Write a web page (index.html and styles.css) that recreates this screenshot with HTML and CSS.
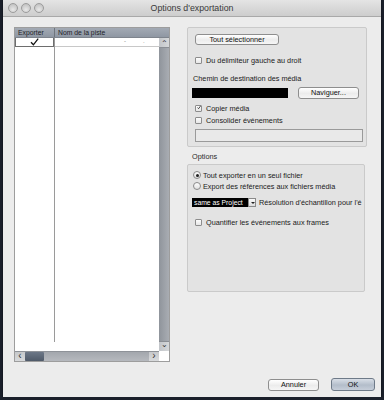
FILE: index.html
```html
<!DOCTYPE html>
<html lang="fr">
<head>
    <meta charset="UTF-8">
    <title>Options d'exportation</title>
    <link rel="stylesheet" href="styles.css">
</head>
<body>
    <div class="window">
        <div class="titlebar">
            <div class="lights"><span></span><span></span><span></span></div>
            <div class="title">Options d'exportation</div>
            <div></div>
        </div>

        <div class="content">
            <div class="main">
                <div class="tracklist">
                    <div class="tl-head">
                        <div class="th th-export">Exporter</div>
                        <div class="th th-name">Nom de la piste</div>
                    </div>
                    <div class="tl-body">
                        <div class="tl-cells">
                            <div class="col col-export">
                                <div class="cell cell-export">
                                    <svg width="9" height="8" viewBox="0 0 9 8"><path d="M1 4.2 L3.4 6.8 L8.2 0.6" fill="none" stroke="#111" stroke-width="1.3"/></svg>
                                </div>
                            </div>
                            <div class="col col-name">
                                <div class="cell cell-name"><span class="dash">-</span><span class="dot">.</span></div>
                            </div>
                        </div>
                        <div class="vscroll">
                            <div class="arrow">&#8963;</div>
                            <div class="track"></div>
                            <div class="arrow down">&#8964;</div>
                        </div>
                    </div>
                    <div class="tl-foot">
                        <div class="hscroll">
                            <div class="harrow">&lsaquo;</div>
                            <div class="thumb"></div>
                            <div class="htrack"></div>
                            <div class="harrow">&rsaquo;</div>
                        </div>
                        <div class="corner"></div>
                    </div>
                </div>

                <div class="side">
                    <div class="group">
                        <button class="btn btn-all">Tout sélectionner</button>
                        <label class="row row-delim"><span class="check"></span>Du délimiteur gauche au droit</label>
                        <div class="label-line">Chemin de destination des média</div>
                        <div class="path-row">
                            <div class="path-field"></div>
                            <button class="btn btn-browse">Naviguer...</button>
                        </div>
                        <label class="row row-copy"><span class="check checked">
                            <svg width="7" height="7" viewBox="0 0 7 7"><path d="M1 3.6 L2.8 5.6 L6.4 0.6" fill="none" stroke="#222" stroke-width="1.4"/></svg>
                        </span>Copier média</label>
                        <label class="row row-merge"><span class="check"></span>Consolider événements</label>
                        <div class="text-field"></div>
                    </div>

                    <div class="group-title">Options</div>
                    <div class="group options">
                        <label class="row radio-row"><span class="radio on"></span>Tout exporter en un seul fichier</label>
                        <label class="row radio-row"><span class="radio"></span>Export des références aux fichiers média</label>
                        <div class="select-row">
                            <div class="select"><span class="select-text">same as Project</span><span class="select-arrow"></span></div>
                            <span class="select-label">Résolution d'échantillon pour l'é</span>
                        </div>
                        <label class="row row-quant"><span class="check"></span>Quantifier les événements aux frames</label>
                    </div>
                </div>
            </div>

            <div class="footer">
                <button class="btn btn-cancel">Annuler</button>
                <button class="btn btn-ok">OK</button>
            </div>
        </div>
    </div>
</body>
</html>
```

FILE: styles.css
```css
body {
    margin: 0;
    padding: 0;
    background: #1b202b;
    font-family: "Liberation Sans", Arial, sans-serif;
    font-size: 7.3px;
    color: #1a1a1a;
}

.window {
    width: 378px;
    height: 397px;
    margin-left: 3px;
    background: #ececec;
    box-shadow: 0 0 2px rgba(0, 0, 0, 0.6);
    display: flex;
    flex-direction: column;
    overflow: hidden;
}

/* barre de titre */
.titlebar {
    height: 16px;
    display: grid;
    grid-template-columns: 1fr auto 1fr;
    align-items: center;
    background: linear-gradient(#e4e4e4, #cdcdcd);
    border-bottom: 1px solid #a9a9a9;
}

.lights {
    display: flex;
    gap: 3px;
    padding-left: 5px;
}

.lights span {
    width: 8px;
    height: 8px;
    border-radius: 50%;
    border: 0.5px solid #9c9c9c;
    background: radial-gradient(circle at 50% 70%, #e8e8e8, #b9b9b9);
}

.title {
    font-size: 8.8px;
    color: #3a3a3a;
}

.content {
    flex: 1;
    padding: 10px 0 0 11px;
    display: flex;
    flex-direction: column;
}

.main {
    display: flex;
    gap: 17px;
}

/* liste des pistes */
.tracklist {
    width: 154px;
    height: 333px;
    border: 1px solid #9d9d9d;
    background: #fff;
    display: flex;
    flex-direction: column;
}

.tl-head {
    height: 9px;
    display: flex;
    background: linear-gradient(#a3aab4, #8f97a3);
    border-bottom: 1px solid #7e848d;
    font-size: 6.8px;
    line-height: 9px;
    color: #1e2228;
}

.th-export {
    width: 36px;
    padding-left: 3px;
    border-right: 1px solid #6f757d;
}

.th-name {
    padding-left: 3px;
}

.tl-body {
    flex: 1;
    display: flex;
}

.tl-cells {
    flex: 1;
    display: flex;
}

.col-export {
    width: 39px;
    border-right: 1px solid #9a9a9a;
    margin-bottom: 9px;
}

.col-name {
    flex: 1;
}

.cell {
    height: 8px;
    border-bottom: 1px solid #8c8c8c;
}

.cell-export {
    border: 1px solid #6e6e6e;
    border-top: none;
    height: 8px;
    display: flex;
    justify-content: center;
}

.cell-name {
    border-bottom-color: #c8c8c8;
    font-size: 6px;
    line-height: 6px;
    color: #777;
}

.dash {
    margin-left: 69px;
}

.dot {
    margin-left: 17px;
}

.vscroll {
    width: 10px;
    display: flex;
    flex-direction: column;
    background: linear-gradient(90deg, #8f949b, #a9adb3);
}

.arrow {
    height: 10px;
    background: linear-gradient(90deg, #c2c5c9, #d6d8da);
    border-bottom: 1px solid #8a8e94;
    box-sizing: border-box;
    font-size: 8px;
    line-height: 12px;
    text-align: center;
    color: #333;
}

.arrow.down {
    border-bottom: none;
    border-top: 1px solid #8a8e94;
    line-height: 5px;
}

.track {
    flex: 1;
}

.tl-foot {
    height: 10px;
    display: flex;
}

.hscroll {
    flex: 1;
    display: flex;
    background: linear-gradient(#a3a7ad, #b6b9be);
    border-top: 1px solid #8e9298;
}

.harrow {
    width: 10px;
    background: linear-gradient(#c6c8cb, #d8dadc);
    font-size: 10px;
    line-height: 8px;
    text-align: center;
    color: #333;
}

.thumb {
    width: 19px;
    background: linear-gradient(#6c7787, #4f5a69);
    border-radius: 1px;
}

.htrack {
    flex: 1;
}

.corner {
    width: 10px;
    background: #fff;
}

/* colonne de droite */
.side {
    width: 180px;
    display: flex;
    flex-direction: column;
}

.group {
    box-sizing: border-box;
    height: 120px;
    border: 1px solid #cacaca;
    border-radius: 2px;
    background: #e3e3e3;
    padding: 6px 0 0 5px;
    display: flex;
    flex-direction: column;
    align-items: flex-start;
}

.btn {
    font-family: "Liberation Sans", Arial, sans-serif;
    font-size: 7.3px;
    color: #111;
    padding: 0;
    border: 1px solid #8e8e8e;
    border-radius: 3px;
    background: linear-gradient(#ffffff, #ececec 55%, #f6f6f6);
}

.btn-all {
    width: 84px;
    height: 11px;
    margin-left: 2px;
    line-height: 9px;
}

.row {
    height: 10px;
    display: flex;
    align-items: center;
    gap: 4px;
    white-space: nowrap;
}

.check {
    width: 7px;
    height: 7px;
    box-sizing: border-box;
    border: 1px solid #8d8d8d;
    border-radius: 1px;
    background: linear-gradient(#fdfdfd, #e6e6e6);
    display: flex;
    align-items: center;
    justify-content: center;
}

.check svg {
    margin-top: -2px;
    margin-left: 1px;
}

.row-delim {
    margin: 10px 0 0 2px;
}

.label-line {
    margin-top: 9px;
    height: 10px;
    line-height: 10px;
}

.path-row {
    display: flex;
    align-items: center;
    gap: 10px;
    margin-top: 3px;
    margin-left: -1px;
}

.path-field {
    width: 96px;
    height: 10px;
    background: #000;
}

.btn-browse {
    width: 61px;
    height: 12px;
    line-height: 10px;
}

.row-copy {
    margin: 4px 0 0 2px;
}

.row-merge {
    margin: 2px 0 0 2px;
}

.text-field {
    width: 166px;
    height: 11px;
    margin: 4px 0 0 2px;
    border: 1px solid #9a9a9a;
    background: #e9e9e9;
}

.group-title {
    height: 10px;
    line-height: 10px;
    margin: 5px 0 2px 5px;
    color: #2a2a2a;
}

.options {
    height: 128px;
    width: 178px;
    padding-top: 5px;
}

.radio-row {
    margin-left: 0;
    gap: 2px;
}

.radio-row + .radio-row {
    margin-top: 1px;
}

.radio {
    width: 8px;
    height: 8px;
    box-sizing: border-box;
    border-radius: 50%;
    border: 1px solid #8a8a8a;
    background: linear-gradient(#fefefe, #e0e0e0);
    position: relative;
}

.radio.on::after {
    content: "";
    position: absolute;
    left: 1.5px;
    top: 1.5px;
    width: 3px;
    height: 3px;
    border-radius: 50%;
    background: #222;
}

.select-row {
    width: 175px;
    margin: 7px 0 0 -1px;
    display: flex;
    align-items: center;
    gap: 3px;
    white-space: nowrap;
    overflow: hidden;
}

.select {
    display: flex;
    height: 9px;
}

.select-text {
    width: 54px;
    background: #000;
    color: #fff;
    font-size: 6.8px;
    line-height: 9px;
    padding-left: 2px;
    overflow: hidden;
}

.select-arrow {
    width: 8px;
    background: linear-gradient(#fafafa, #dcdcdc);
    border: 1px solid #8a8a8a;
    box-sizing: border-box;
    position: relative;
}

.select-arrow::after {
    content: "";
    position: absolute;
    left: 1.5px;
    top: 3px;
    border-left: 2px solid transparent;
    border-right: 2px solid transparent;
    border-top: 2px solid #222;
}

.row-quant {
    margin: 10px 0 0 2px;
}

/* boutons du bas */
.footer {
    margin-top: 16px;
    padding-right: 6px;
    display: flex;
    justify-content: flex-end;
    align-items: center;
    gap: 12px;
}

.btn-cancel {
    width: 51px;
    height: 12px;
    line-height: 10px;
}

.btn-ok {
    width: 44px;
    height: 13px;
    line-height: 11px;
    border-color: #6e7a88;
    background: linear-gradient(#d9dfe7, #b3bdca 55%, #c6ced9);
}
```
